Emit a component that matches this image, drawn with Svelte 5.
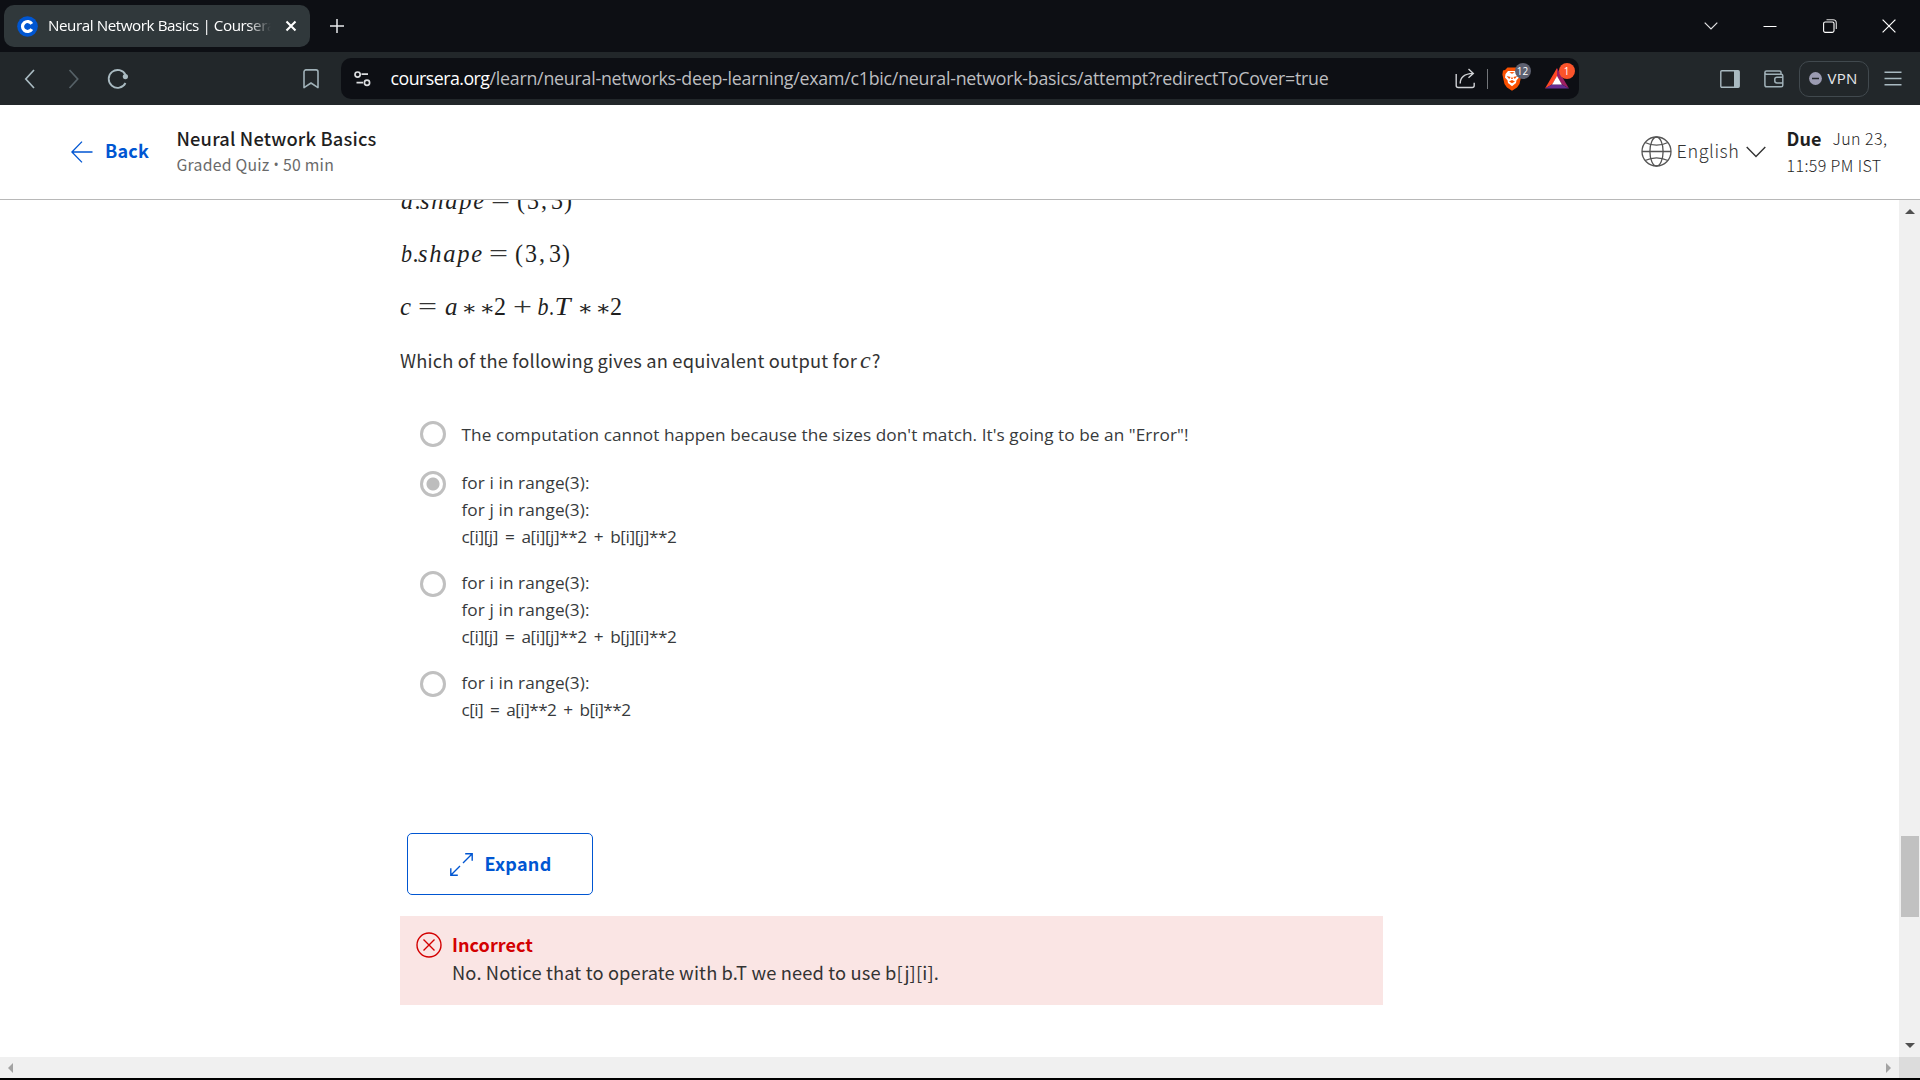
<script>
  // Spreads a line's letter spacing so the line takes the given width.
  function fit(node, width) {
    const count = [...node.textContent.trim()].length;
    const natural = node.getBoundingClientRect().width;
    node.style.letterSpacing = `${(width - natural) / count}px`;
  }

  // Formula tokens: [text, x, width, kind]
  const formulas = [
    [['a', 1, 12, 'italic'], ['.', 14.5, 6, ''], ['shape', 20, 64, 'italic'], ['=', 91, 19, 'thin'], ['(', 117, 8, ''], ['3', 127, 12, ''], [',', 141, 6, ''], ['3', 151, 12, ''], [')', 164, 8, '']],
    [['b', 1, 11, 'italic'], ['.', 12.5, 6, ''], ['shape', 18, 64, 'italic'], ['=', 89, 19, 'thin'], ['(', 115, 8, ''], ['3', 125, 12, ''], [',', 139, 6, ''], ['3', 149, 12, ''], [')', 162, 8, '']],
    [['c', 0, 11, 'italic'], ['=', 18, 19, 'thin'], ['a', 45, 12.5, 'italic'], ['*', 63.5, 11.5, 'star'], ['*', 81.5, 11.5, 'star'], ['2', 94, 12, ''], ['+', 113, 19, 'thin'], ['b', 137.5, 11, 'italic'], ['.', 149, 5, ''], ['T', 154.5, 16, 'italic'], ['*', 179.5, 11.5, 'star'], ['*', 197.5, 11.5, 'star'], ['2', 210, 12, '']]
  ];

  const options = [
    { picked: false, lines: [['The computation cannot happen because the sizes don\'t match. It\'s going to be an "Error"!', 727]] },
    { picked: true, lines: [['for i in range(3):', 128], ['for j in range(3):', 128], ['c[i][j] = a[i][j]**2 + b[i][j]**2', 215]] },
    { picked: false, lines: [['for i in range(3):', 128], ['for j in range(3):', 128], ['c[i][j] = a[i][j]**2 + b[j][i]**2', 215]] },
    { picked: false, lines: [['for i in range(3):', 128], ['c[i] = a[i]**2 + b[i]**2', 169]] }
  ];
</script>

<div class="window">
  <div class="tabs">
    <div class="tab">
      <svg class="fav" width="21" height="21" viewBox="0 0 21 21"><circle cx="10.5" cy="10.5" r="10.3" fill="#0056d2" /><path d="M14.8 7.9A5 5 0 1 0 14.8 13.1" fill="none" stroke="#fff" stroke-width="3.2" /></svg>
      <div class="tabtitle"><span use:fit={227}>Neural Network Basics | Coursera</span></div>
      <svg width="12" height="12" viewBox="0 0 12 12"><path d="M1.5 1.5 10.5 10.5M10.5 1.5 1.5 10.5" stroke="#fff" stroke-width="2.1" /></svg>
    </div>
    <svg class="plus" width="14" height="14" viewBox="0 0 14 14"><path d="M7 0V14M0 7H14" stroke="#e8eaec" stroke-width="1.5" /></svg>
    <div class="controls">
      <svg width="14" height="8" viewBox="0 0 14 8"><path d="M.7.7 7 7 13.3.7" fill="none" stroke="#e4e4e6" stroke-width="1.2" /></svg>
      <svg width="14" height="8" viewBox="0 0 14 8"><path d="M.5 4.5H13.5" stroke="#fff" stroke-width="1" /></svg>
      <svg width="14" height="14" viewBox="0 0 14 14"><rect x=".6" y="3" width="10.4" height="10.4" rx="1.6" fill="none" stroke="#fff" stroke-width="1.1" /><path d="M3.5.8H10A3.3 3.3 0 0 1 13.3 4V10" fill="none" stroke="#ddd" stroke-width="1.1" /></svg>
      <svg width="14" height="14" viewBox="0 0 14 14"><path d="M.6.6 13.4 13.4M13.4.6.6 13.4" stroke="#fff" stroke-width="1.2" /></svg>
    </div>
  </div>

  <div class="toolbar">
    <svg class="nav" width="110" height="24" viewBox="0 0 110 24" fill="none">
      <path d="M10 3 1.8 12 10 21" stroke="#a9bac1" stroke-width="1.7" />
      <path d="M45.5 3 53.7 12 45.5 21" stroke="#566167" stroke-width="1.7" />
      <path d="M101.5 16A8.9 8.9 0 1 1 101.6 8" stroke="#a9bac1" stroke-width="1.8" />
      <circle cx="101.4" cy="9.6" r="2.6" fill="#a9bac1" />
    </svg>
    <svg class="bookmark" width="16" height="20" viewBox="0 0 16 20"><path d="M3 .9H13A2 2 0 0 1 15 2.9V18.6L8 14 1 18.6V2.9A2 2 0 0 1 3 .9Z" fill="none" stroke="#a0b1b8" stroke-width="1.6" stroke-linejoin="round" /></svg>
    <div class="address">
      <svg class="tune" width="17" height="16" viewBox="0 0 17 16" fill="none" stroke="#dcdee0" stroke-width="1.7"><circle cx="3.6" cy="3.6" r="2.6" /><path d="M7.5 3.1H14M2.5 11.6H9" /><circle cx="13" cy="11.8" r="2.6" /></svg>
      <div class="url"><span use:fit={99}>coursera.org</span><span class="path" use:fit={839}>/learn/neural-networks-deep-learning/exam/c1bic/neural-network-basics/attempt?redirectToCover=true</span></div>
      <svg class="share" width="21" height="21" viewBox="0 0 21 21" fill="none" stroke="#d0d2d5" stroke-width="1.4"><path d="M1.2 6V17.5A2 2 0 0 0 3.2 19.5H17.2A2 2 0 0 0 19.2 17.5V14.8M5.2 15.5C5.2 9 10 5.8 18 5.4M13.5 1 18.3 5.4 13.5 9.8" /></svg>
      <div class="split"></div>
      <div class="shield">
        <svg width="20" height="24" viewBox="0 0 20 24"><path d="M5.5.5H14.5L17 3 19 3.5 19.6 7.5 17.5 17 15 20.5 10 23.7 5 20.5 2.5 17 .4 7.5 1 3.5 3 3Z" fill="#fb5000" /><path d="M6 4H14L16.5 7 17 10.5 14.5 13.3 14 16 10 19.3 6 16 5.5 13.3 3 10.5 3.5 7Z" fill="#fff" /><path d="M4.6 9 8.7 10 7.2 12ZM15.4 9 11.3 10 12.8 12ZM7.2 5.5 10 4.9 12.8 5.5 10 6.8ZM7 14.6 10 13 13 14.6 10 16.2ZM10 9.5 11 12 9 12Z" fill="#fb5000" /></svg>
        <span class="badge gray">12</span>
      </div>
      <div class="bat">
        <svg width="24" height="21" viewBox="0 0 24 21"><path d="M12 0 0 20.6 7.3 16.3 12 8.4Z" fill="#ff4724" /><path d="M12 0 24 20.6 16.7 16.3 12 8.4Z" fill="#9e1f63" /><path d="M0 20.6H24L16.7 16.3H7.3Z" fill="#662d91" /><path d="M12 8 16.9 16.5H7.1Z" fill="#fff" /></svg>
        <span class="badge red">1</span>
      </div>
    </div>
    <svg class="side" width="20" height="18" viewBox="0 0 20 18"><rect x=".8" y=".8" width="18.4" height="16.4" rx="1" fill="none" stroke="#a9bac1" stroke-width="1.4" /><path d="M14 1H19V17H14Z" fill="#a9bac1" /></svg>
    <svg class="wallet" width="20" height="18" viewBox="0 0 20 18" fill="none" stroke="#a0b1b8" stroke-width="1.5"><path d="M17 4V2.3Q17 .9 15.5.9H2.5Q.9.9.9 2.4T2.5 4.2H17.3Q18.8 4.2 18.8 5.7V15.2Q18.8 16.8 17.2 16.8H2.7Q.9 16.8.9 15V2.4" /><path d="M19 7.2H13Q10.8 7.2 10.8 9.1V11Q10.8 12.9 13 12.9H19" /></svg>
    <div class="vpn">
      <svg width="13" height="13" viewBox="0 0 13 13"><circle cx="6.5" cy="6.5" r="6.4" fill="#9b9bb1" /><path d="M3 6.5H10" stroke="#22272a" stroke-width="1.5" /></svg>
      <span use:fit={30}>VPN</span>
    </div>
    <svg class="burger" width="18" height="15" viewBox="0 0 18 15"><path d="M.5 1.3H17.5M.5 7.5H17.5M.5 13.7H17.5" stroke="#a9bac1" stroke-width="1.5" /></svg>
  </div>

  <header>
    <svg class="arrow" width="22" height="22" viewBox="0 0 22 22"><path d="M11 .6.9 11 11 21.4M1 11H21.5" fill="none" stroke="#0056d2" stroke-width="1.3" /></svg>
    <div class="back"><span use:fit={44}>Back</span></div>
    <div class="heading">
      <div class="title"><span use:fit={200}>Neural Network Basics</span></div>
      <div class="sub"><span use:fit={93}>Graded Quiz</span><span class="dot">•</span><span use:fit={51}>50 min</span></div>
    </div>
    <svg class="globe" width="31" height="31" viewBox="0 0 31 31" fill="none" stroke="#555" stroke-width="1.3"><circle cx="15.5" cy="15.5" r="14.5" /><ellipse cx="15.5" cy="15.5" rx="6.6" ry="14.5" /><path d="M1 15.5H30M4 6.5C11 9.8 20 9.8 27 6.5M4 24.5C11 21.2 20 21.2 27 24.5" /></svg>
    <div class="lang"><span use:fit={63}>English</span></div>
    <svg class="chev" width="20" height="12" viewBox="0 0 20 12"><path d="M.7 1 10 10.6 19.3 1" fill="none" stroke="#333" stroke-width="1.4" /></svg>
    <div class="due">
      <div class="dueline"><b use:fit={35}>Due</b><span use:fit={55}>Jun 23,</span></div>
      <div class="dueline"><span use:fit={95}>11:59 PM IST</span></div>
    </div>
  </header>

  <div class="view">
    <main>
      {#each formulas as tokens}
        <svg class="formula" width="300" height="53" viewBox="0 0 300 53">
          {#each tokens as [text, x, width, kind]}
            <text class={kind} {x} y={kind === 'star' ? 40 : 36} textLength={width} lengthAdjust={text.length > 1 ? 'spacing' : 'spacingAndGlyphs'}>{text}</text>
          {/each}
        </svg>
      {/each}
      <p class="question"><span use:fit={457}>Which of the following gives an equivalent output for</span><i>c</i><span>?</span></p>

      <div class="options">
        {#each options as option}
          <div class="option">
            <div class="radio" class:picked={option.picked}></div>
            <div class="code">
              {#each option.lines as [line, width]}
                <div class:sum={line.includes('=')}><span use:fit={width}>{line}</span></div>
              {/each}
            </div>
          </div>
        {/each}
      </div>

      <button>
        <svg width="23" height="23" viewBox="0 0 23 23" fill="none" stroke="#0056d2" stroke-width="1.4"><path d="M13 10 22 1M15.2.8H22.2V7.8M10 13 1 22M.8 15.2V22.2H7.8" /></svg>
        <span use:fit={67}>Expand</span>
      </button>

      <section class="alert">
        <svg width="26" height="26" viewBox="0 0 26 26" fill="none" stroke="#d30001" stroke-width="1.4"><circle cx="13" cy="13" r="12" /><path d="M7.5 7.5 18.5 18.5M18.5 7.5 7.5 18.5" /></svg>
        <div>
          <div class="wrong"><span use:fit={81}>Incorrect</span></div>
          <div class="note"><span use:fit={487}>No. Notice that to operate with b.T we need to use b[j][i].</span></div>
        </div>
      </section>
    </main>
    <div class="vbar">
      <svg width="10" height="5" viewBox="0 0 10 5"><path d="M0 5 5 0 10 5Z" fill="#505050" /></svg>
      <div class="thumb"></div>
      <svg width="10" height="5" viewBox="0 0 10 5"><path d="M0 0H10L5 5Z" fill="#505050" /></svg>
    </div>
  </div>
  <div class="hbar">
    <svg width="5" height="10" viewBox="0 0 5 10"><path d="M5 0V10L0 5Z" fill="#a3a3a3" /></svg>
    <svg class="right" width="5" height="10" viewBox="0 0 5 10"><path d="M0 0V10L5 5Z" fill="#a3a3a3" /></svg>
    <div class="corner"></div>
  </div>
</div>

<style>
  :global(body) { margin: 0; background: #000; overflow: hidden; }
  .window { width: 1920px; height: 1080px; box-sizing: border-box; background: #000; font-family: "Noto Sans CJK SC", sans-serif; color: #1f1f1f; display: flex; flex-direction: column; overflow: hidden; }
  .window * { box-sizing: border-box; }
  svg { display: block; flex: none; }
  span, b { white-space: pre; }

  .tabs { height: 52px; flex: none; background: #0d0f14; display: flex; align-items: flex-start; padding: 5px 0 0 4px; font-family: "Open Sans", sans-serif; }
  .tab { width: 306px; height: 42px; background: #30383b; border-radius: 10px; display: flex; align-items: center; padding-left: 13px; }
  .tabtitle { width: 225px; margin: 0 12px 2px 10px; overflow: hidden; color: #fff; font-size: 15.2px; line-height: 24px; -webkit-mask-image: linear-gradient(90deg, #000 200px, transparent 223px); mask-image: linear-gradient(90deg, #000 200px, transparent 223px); }
  .plus { margin: 14px 0 0 20px; }
  .controls { margin-left: auto; height: 41px; display: flex; align-items: center; gap: 45.4px; padding-right: 24px; }

  .toolbar { height: 53px; flex: none; background: #22272a; display: flex; align-items: center; font-family: "Open Sans", sans-serif; }
  .nav { margin-left: 24px; }
  .bookmark { margin-left: 169px; }
  .address { width: 1238px; height: 41px; margin-left: 22px; background: #0d0f14; border-radius: 10px; display: flex; align-items: center; }
  .tune { margin-left: 13px; }
  .url { width: 960px; margin-left: 19.5px; font-size: 17.8px; line-height: 26px; color: #fff; display: flex; padding-bottom: 2px; }
  .path { color: #bdbec0; }
  .share { margin-left: 104px; }
  .split { width: 1px; height: 20px; background: #73767a; margin-left: 11px; }
  .shield { position: relative; margin-left: 14px; }
  .bat { position: relative; margin-left: 23px; }
  .badge { position: absolute; height: 16px; border-radius: 8px; color: #fff; font: 10px/16px "Open Sans", sans-serif; text-align: center; }
  .gray { left: 13px; top: -4px; width: 16px; background: #5d6070; }
  .red { left: 14px; top: -5px; width: 16px; background: #fb542b; }
  .side { margin-left: 141px; }
  .wallet { margin-left: 24px; }
  .vpn { width: 70px; height: 36px; margin-left: 15px; border: 1px solid #41494e; border-radius: 10px; display: flex; align-items: center; gap: 5.5px; padding: 0 0 1px 9px; color: #e6e8ea; font-size: 15px; }
  .vpn span { margin-top: -1px; }
  .burger { margin-left: 15px; }

  header { height: 95px; flex: none; background: #fff; border-bottom: 1px solid #b8b8b8; display: flex; align-items: center; padding: 0 0 2px 71px; }
  .arrow { margin-top: 2px; }
  .back { width: 44px; margin: -2px 0 0 12px; font-size: 18px; line-height: 26px; font-weight: 700; color: #0056d2; }
  .heading { width: 1463px; margin-left: 27.5px; line-height: 26px; }
  .title { font-size: 18.3px; font-weight: 500; }
  .sub { font-size: 15.8px; color: #6a6a6a; display: flex; height: 26px; padding-top: 1px; }
  .dot { width: 13.5px; text-align: center; font-family: "Open Sans", sans-serif; font-size: 14px; }
  .globe { margin-left: 1px; margin-top: 1px; }
  .lang { width: 63px; margin: -2px 0 0 5px; font-size: 18px; line-height: 26px; color: #333; font-weight: 300; }
  .chev { margin-left: 6px; margin-top: 1px; }
  .due { margin-left: 21px; line-height: 27px; font-size: 16px; font-weight: 300; padding-top: 1px; }
  .dueline { display: flex; gap: 11px; height: 27px; }
  .dueline b { font-size: 18px; line-height: 26px; font-weight: 700; }

  .view { height: 857px; flex: none; background: #fff; display: flex; overflow: hidden; }
  main { width: 1899px; padding-left: 400px; overflow: hidden; }
  .formula { margin-top: 0; }
  .formula:first-child { margin-top: -27px; }
  .formula text { font-family: "Liberation Serif", serif; font-size: 24.5px; fill: #1f1f1f; }
  .formula .italic { font-style: italic; }
  .formula .thin { fill: #333; }
  .formula .star { font-family: "DejaVu Serif", serif; font-size: 21px; }
  .question { margin: 14px 0 0; height: 28px; display: flex; font-size: 18.3px; line-height: 28px; color: #333; }
  .question i { font: italic 24px/28px "Liberation Serif", serif; margin: 0 1px 0 3px; }
  .options { margin-top: 46.5px; padding-left: 19.5px; height: 412.5px; font-family: "Open Sans", sans-serif; }
  .option { display: flex; margin-bottom: 19px; }
  .option:first-child { margin-bottom: 21.3px; }
  .radio { width: 26px; height: 26px; margin-top: 2px; border: 3px solid #c0c0c0; border-radius: 50%; }
  .option:first-child .radio { margin-top: 0; }
  .picked { background: radial-gradient(circle, #bdbdbd 6px, transparent 7px); }
  .code { margin-left: 16px; font-size: 17.2px; line-height: 27px; color: #373a3c; }
  .sum { word-spacing: 3px; }
  button { margin-left: 7px; width: 186px; height: 62px; border: 1.5px solid #0056d2; border-radius: 5px; background: #fff; color: #0056d2; font: 700 18px/26px "Noto Sans CJK SC", sans-serif; padding: 0 0 0 42px; display: flex; align-items: center; gap: 11.5px; }
  button span { margin-top: -2px; }
  .alert { margin-top: 21px; width: 983px; height: 89px; background: #fae5e4; padding: 14px 16px; display: flex; gap: 10px; }
  .alert svg { margin-top: 2px; }
  .wrong { font-size: 18px; line-height: 28px; color: #d30001; font-weight: 700; }
  .note { font-size: 18.3px; line-height: 28px; color: #333; }

  .vbar { width: 21px; background: #f0f0f0; display: flex; flex-direction: column; align-items: center; padding-top: 9px; }
  .thumb { width: 18px; height: 81px; margin: 622px 0 126px; background: #c1c1c1; }
  .hbar { height: 21px; flex: none; background: #f0f0f0; display: flex; align-items: center; padding-left: 8px; }
  .right { margin-left: auto; margin-right: 8px; }
  .corner { width: 21px; height: 21px; background: #dcdcdc; }
</style>
